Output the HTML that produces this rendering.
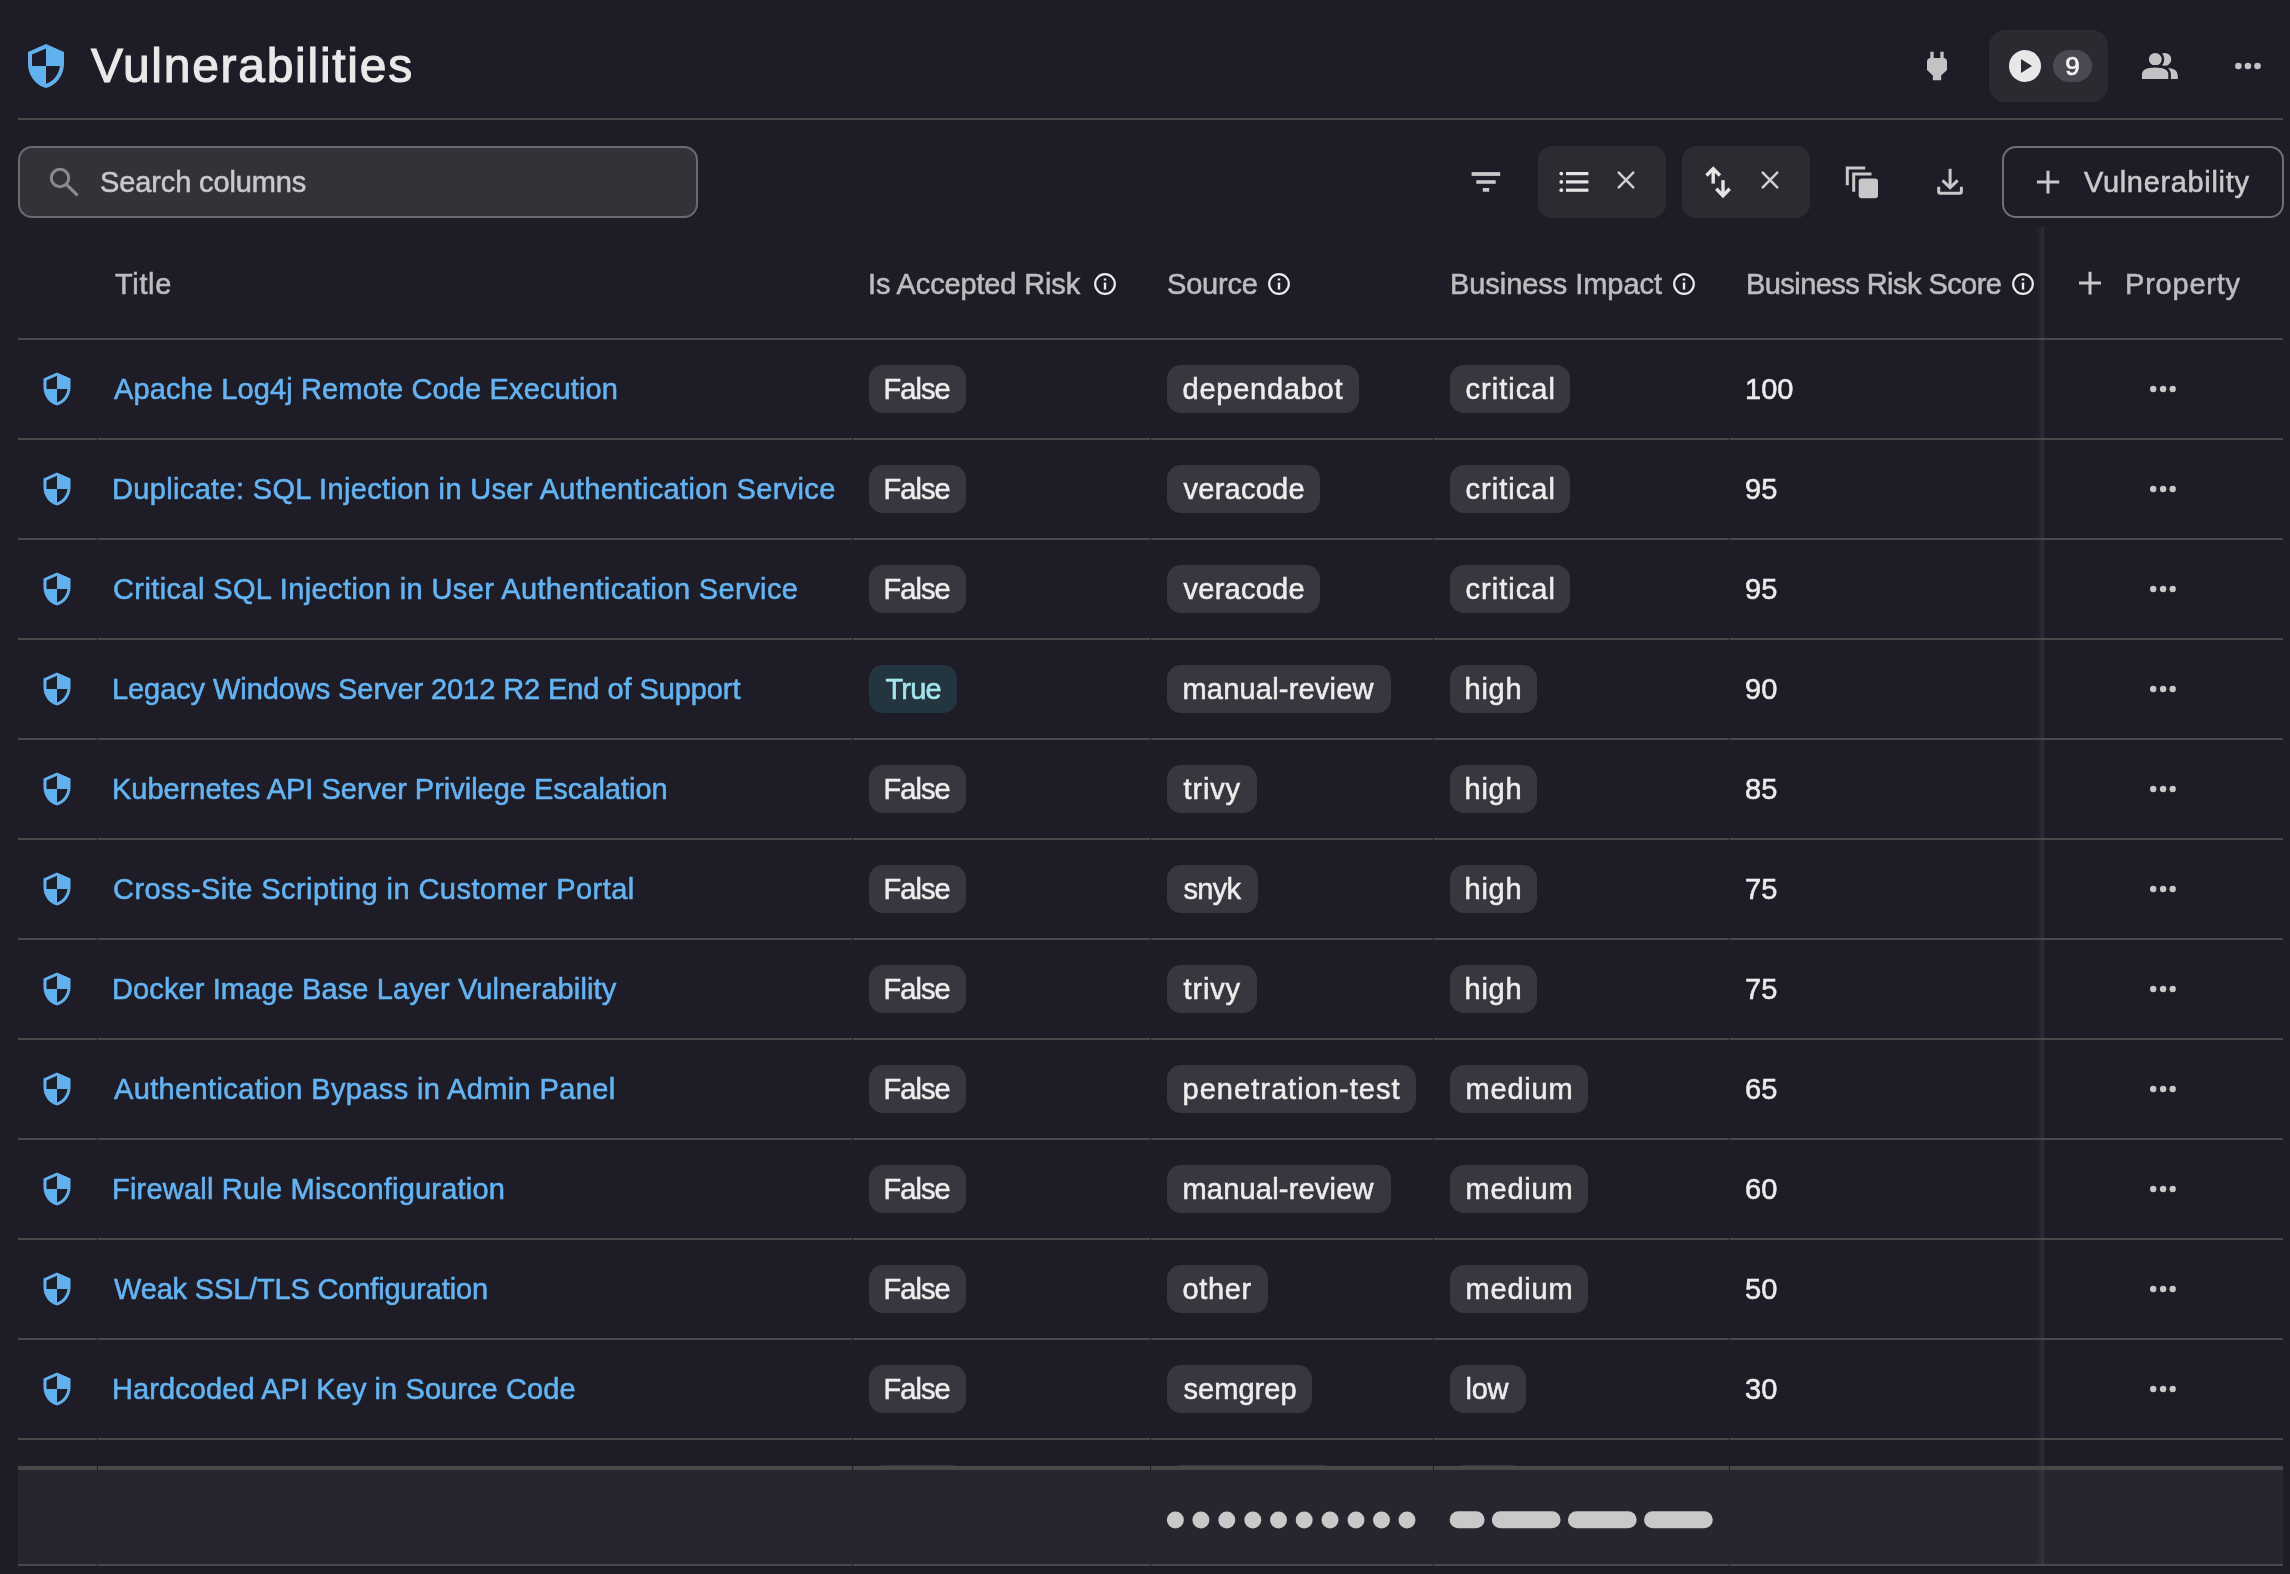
<!DOCTYPE html>
<html>
<head>
<meta charset="utf-8">
<style>
html,body{margin:0;padding:0;}
body{width:2290px;height:1574px;background:#1e1c26;position:relative;overflow:hidden;font-family:"Liberation Sans",sans-serif;}
.t,.pill{will-change:transform;-webkit-text-stroke:0.55px currentColor;}
.a{position:absolute;}
.t{position:absolute;white-space:nowrap;font-size:29px;line-height:29px;}
.hline{position:absolute;height:2px;background:#484749;}
.row{position:absolute;left:0;width:2290px;height:100px;}
.rl{position:absolute;left:18px;top:98px;width:2265px;height:2px;background:linear-gradient(90deg,#484749 0 79px,#1e1c26 79px 80px,#484749 80px 834px,#1e1c26 834px 835px,#484749 835px 1132px,#1e1c26 1132px 1133px,#484749 1133px 1415px,#1e1c26 1415px 1416px,#484749 1416px 1711px,#1e1c26 1711px 1712px,#484749 1712px);}
.pill{position:absolute;box-sizing:border-box;height:48px;border-radius:14px;background:#38363e;color:#ededed;font-size:29px;line-height:48px;text-align:left;white-space:nowrap;}
.pill.tr{background:#23353e;color:#a6e5ee;}
.link{color:#64b4f3;}
.hdr{color:#bdbcbf;}
.score{color:#ececec;}
.tb{position:absolute;top:146px;width:128px;height:72px;border-radius:14px;background:#2c2b32;}
</style>
</head>
<body>
<svg width="0" height="0" style="position:absolute">
<defs>
<path id="sh" fill="#62b1ef" d="M12 1L3 5v6c0 5.55 3.84 10.74 9 12 5.16-1.26 9-6.45 9-12V5l-9-4zm0 10.99h7c-.53 4.12-3.28 7.79-7 8.94V12H5V6.3l7-3.11v8.8z"/>
<g id="dots" fill="#c8c8c8"><circle cx="5.2" cy="5" r="3.2"/><circle cx="15.1" cy="5" r="3.2"/><circle cx="24.7" cy="5" r="3.2"/></g>
<g id="info"><circle cx="11" cy="11" r="9.8" stroke-width="2.2" fill="none" stroke="#ececec"/><rect x="9.8" y="9.6" width="2.4" height="7" fill="#ececec"/><rect x="9.8" y="5.4" width="2.4" height="2.1" fill="#ececec"/></g>
</defs>
</svg>

<!-- page header -->
<svg class="a" style="left:22px;top:42px" width="48" height="48" viewBox="0 0 24 24"><use href="#sh"/></svg>
<div class="t" style="left:91px;top:42.3px;font-size:48px;line-height:48px;color:#e9e9ea;letter-spacing:1.72px;-webkit-text-stroke:1.1px #e9e9ea">Vulnerabilities</div>

<!-- plug -->
<svg class="a" style="left:1917px;top:46.75px" width="40" height="38" viewBox="0 0 24 24" preserveAspectRatio="none"><path fill="#c3c3c5" d="M16.01 7L16 3h-2v4h-4V3H8v4h-.01C7 6.99 6 7.99 6 8.99v5.49L9.5 18v3h5v-3l3.5-3.51v-5.5c0-1-1-2-1.99-1.99z"/></svg>
<!-- run pill -->
<div class="a" style="left:1989px;top:30px;width:119px;height:72px;border-radius:16px;background:#2b2a31"></div>
<svg class="a" style="left:2009px;top:50px" width="32" height="32" viewBox="0 0 32 32"><circle cx="16" cy="16" r="16" fill="#e8e8e9"/><path d="M12 9 L12 23 L23 16 Z" fill="#2b2a31"/></svg>
<div class="a" style="left:2053px;top:50px;width:39px;height:32px;border-radius:16px;background:#4a4850"></div>
<div class="t" style="left:2053px;top:50px;width:39px;height:32px;color:#f6f6f6;font-size:26px;line-height:32px;text-align:center;-webkit-text-stroke:0.6px #f6f6f6">9</div>
<!-- people -->
<svg class="a" style="left:2138px;top:50px" width="44" height="32" viewBox="2138 50 44 32">
<circle cx="2164.8" cy="59.4" r="6.4" fill="#c3c3c5"/>
<path d="M2152 79 V72 Q2152 67.9 2162 67.9 H2167 Q2177.8 68.2 2177.8 75.5 V79 Z" fill="#c3c3c5"/>
<circle cx="2155.3" cy="59.3" r="7.7" fill="#c3c3c5" stroke="#1e1c26" stroke-width="2.6"/>
<path d="M2140.7 80.3 V74.5 Q2140.7 66.2 2155.2 66.2 Q2169.6 66.2 2169.6 74.5 V80.3 Z" fill="#c3c3c5" stroke="#1e1c26" stroke-width="2.6"/>
<rect x="2138" y="79" width="44" height="4" fill="#1e1c26"/>
</svg>
<svg class="a" style="left:2233px;top:61px" width="30" height="10" viewBox="0 0 30 10"><g fill="#c3c3c5"><circle cx="5.4" cy="5" r="3.3"/><circle cx="14.9" cy="5" r="3.3"/><circle cx="24.5" cy="5" r="3.3"/></g></svg>

<div class="hline" style="left:18px;top:118px;width:2265px"></div>

<!-- search -->
<div class="a" style="left:18px;top:146px;width:676px;height:68px;border:2px solid #6b6a6e;border-radius:14px;background:#343239"></div>
<svg class="a" style="left:40px;top:158px" width="44" height="44" viewBox="40 158 44 44"><circle cx="60" cy="178" r="8.7" fill="none" stroke="#8a898d" stroke-width="3"/><line x1="66.3" y1="184.3" x2="77.6" y2="195.4" stroke="#8a898d" stroke-width="3.2"/></svg>
<div class="t" style="left:99.8px;top:167.6px;color:#c9c8cb;letter-spacing:-0.125px">Search columns</div>

<!-- toolbar -->
<svg class="a" style="left:1466px;top:162px" width="40" height="40" viewBox="1466 162 40 40"><g fill="#c8c8ca"><rect x="1471.6" y="172.1" width="28.6" height="3.8"/><rect x="1476.3" y="180.2" width="19.4" height="3.6"/><rect x="1482.8" y="188" width="6.4" height="3.7"/></g></svg>
<div class="tb" style="left:1538px"></div>
<svg class="a" style="left:1550px;top:160px" width="100" height="40" viewBox="1550 160 100 40"><g fill="#e6e6e7"><circle cx="1561.3" cy="173.6" r="1.9"/><circle cx="1561.3" cy="181.9" r="1.9"/><circle cx="1561.3" cy="190.2" r="1.9"/><rect x="1566" y="172" width="22.4" height="3.2"/><rect x="1566" y="180.3" width="22.4" height="3.2"/><rect x="1566" y="188.6" width="22.4" height="3.2"/></g><path d="M1618 171.9 L1634 188.2 M1634 171.9 L1618 188.2" stroke="#cfcfd1" stroke-width="2.5"/></svg>
<div class="tb" style="left:1682px"></div>
<svg class="a" style="left:1695px;top:160px" width="100" height="45" viewBox="1695 160 100 45"><g fill="none" stroke="#e6e6e7" stroke-width="3.4"><path d="M1713.2 183.6 V169"/><path d="M1706.5 175.5 L1713.2 168.6 L1719.9 175.5"/><path d="M1723 180.2 V196"/><path d="M1716.3 188.8 L1723 195.7 L1729.7 188.8"/></g><path d="M1762 171.9 L1778 188.2 M1778 171.9 L1762 188.2" stroke="#cfcfd1" stroke-width="2.5"/></svg>
<svg class="a" style="left:1840px;top:160px" width="45" height="45" viewBox="1840 160 45 45"><g fill="none" stroke="#c8c8ca" stroke-width="3"><path d="M1847.3 185.3 V167.9 H1865.2"/><path d="M1853.7 191.8 V174 H1871.5"/></g><rect x="1858.7" y="178.6" width="19.3" height="19.6" rx="3" fill="#c8c8ca"/></svg>
<svg class="a" style="left:1930px;top:160px" width="40" height="40" viewBox="1930 160 40 40"><g fill="none" stroke="#c8c8ca" stroke-width="3"><path d="M1950.1 168.8 V187"/><path d="M1942.5 180.3 L1950.1 187.6 L1957.7 180.3"/><path d="M1938.7 186.7 V191.5 Q1938.7 193.3 1940.5 193.3 H1959.6 Q1961.4 193.3 1961.4 191.5 V186.7"/></g></svg>
<div class="a" style="left:2002px;top:146px;width:278px;height:68px;border:2px solid #706f73;border-radius:14px"></div>
<svg class="a" style="left:2030px;top:165px" width="36" height="36" viewBox="2030 165 36 36"><path d="M2036.9 182 H2059.2 M2048 170.7 V193.4" stroke="#c8c8ca" stroke-width="3"/></svg>
<div class="t" style="left:2084px;top:167.7px;color:#c9c8cb;letter-spacing:0.667px">Vulnerability</div>

<!-- table header -->
<div class="t hdr" style="left:114.5px;top:270.4px;letter-spacing:0.655px">Title</div>
<div class="t hdr" style="left:868px;top:270.4px;letter-spacing:-0.145px">Is Accepted Risk</div>
<svg class="a" style="left:1094px;top:273.2px" width="22" height="22"><use href="#info"/></svg>
<div class="t hdr" style="left:1166.5px;top:270.4px;letter-spacing:-0.191px">Source</div>
<svg class="a" style="left:1268px;top:273.1px" width="22" height="22"><use href="#info"/></svg>
<div class="t hdr" style="left:1449.5px;top:270.4px;letter-spacing:-0.057px">Business Impact</div>
<svg class="a" style="left:1673px;top:273.2px" width="22" height="22"><use href="#info"/></svg>
<div class="t hdr" style="left:1745.6px;top:270.4px;letter-spacing:-0.556px">Business Risk Score</div>
<svg class="a" style="left:2012px;top:273.2px" width="22" height="22"><use href="#info"/></svg>
<svg class="a" style="left:2075px;top:268px" width="30" height="30" viewBox="2075 268 30 30"><path d="M2079 283 H2101 M2090 271.8 V294.4" stroke="#c8c8ca" stroke-width="3"/></svg>
<div class="t hdr" style="left:2125.3px;top:269.7px;letter-spacing:0.786px">Property</div>
<div class="hline" style="left:18px;top:338px;width:2265px"></div>

<!-- sticky separator -->
<div class="a" style="left:2035px;top:227px;width:9px;height:1239px;background:linear-gradient(90deg,rgba(255,255,255,0),rgba(255,255,255,0.02) 40%,rgba(255,255,255,0.075))"></div>
<div class="row" style="top:340px">
<svg class="a" style="left:39px;top:30.5px" width="36" height="36" viewBox="0 0 24 24"><use href="#sh"/></svg>
<div class="t link" style="left:114px;top:34.5px;letter-spacing:0.125px">Apache Log4j Remote Code Execution</div>
<div class="pill" style="left:869px;top:25px;width:97px;padding-left:14.5px;letter-spacing:-0.946px">False</div>
<div class="pill" style="left:1167px;top:25px;width:192px;padding-left:15.5px;letter-spacing:0.76px">dependabot</div>
<div class="pill" style="left:1450px;top:25px;width:120px;padding-left:15.5px;letter-spacing:1.039px">critical</div>
<div class="t score" style="left:1745px;top:34.5px">100</div>
<svg class="a" style="left:2148px;top:44px" width="30" height="10"><use href="#dots"/></svg>
<div class="rl"></div></div>
<div class="row" style="top:440px">
<svg class="a" style="left:39px;top:30.5px" width="36" height="36" viewBox="0 0 24 24"><use href="#sh"/></svg>
<div class="t link" style="left:112px;top:34.5px;letter-spacing:0.34px">Duplicate: SQL Injection in User Authentication Service</div>
<div class="pill" style="left:869px;top:25px;width:97px;padding-left:14.5px;letter-spacing:-0.946px">False</div>
<div class="pill" style="left:1167px;top:25px;width:153px;padding-left:16.5px;letter-spacing:0.261px">veracode</div>
<div class="pill" style="left:1450px;top:25px;width:120px;padding-left:15.5px;letter-spacing:1.039px">critical</div>
<div class="t score" style="left:1745px;top:34.5px">95</div>
<svg class="a" style="left:2148px;top:44px" width="30" height="10"><use href="#dots"/></svg>
<div class="rl"></div></div>
<div class="row" style="top:540px">
<svg class="a" style="left:39px;top:30.5px" width="36" height="36" viewBox="0 0 24 24"><use href="#sh"/></svg>
<div class="t link" style="left:113px;top:34.5px;letter-spacing:0.39px">Critical SQL Injection in User Authentication Service</div>
<div class="pill" style="left:869px;top:25px;width:97px;padding-left:14.5px;letter-spacing:-0.946px">False</div>
<div class="pill" style="left:1167px;top:25px;width:153px;padding-left:16.5px;letter-spacing:0.261px">veracode</div>
<div class="pill" style="left:1450px;top:25px;width:120px;padding-left:15.5px;letter-spacing:1.039px">critical</div>
<div class="t score" style="left:1745px;top:34.5px">95</div>
<svg class="a" style="left:2148px;top:44px" width="30" height="10"><use href="#dots"/></svg>
<div class="rl"></div></div>
<div class="row" style="top:640px">
<svg class="a" style="left:39px;top:30.5px" width="36" height="36" viewBox="0 0 24 24"><use href="#sh"/></svg>
<div class="t link" style="left:112px;top:34.5px;letter-spacing:-0.08px">Legacy Windows Server 2012 R2 End of Support</div>
<div class="pill tr" style="left:869px;top:25px;width:88px;padding-left:16.5px;letter-spacing:-0.808px">True</div>
<div class="pill" style="left:1167px;top:25px;width:224px;padding-left:15.5px;letter-spacing:0.198px">manual-review</div>
<div class="pill" style="left:1450px;top:25px;width:87px;padding-left:14.5px;letter-spacing:0.767px">high</div>
<div class="t score" style="left:1745px;top:34.5px">90</div>
<svg class="a" style="left:2148px;top:44px" width="30" height="10"><use href="#dots"/></svg>
<div class="rl"></div></div>
<div class="row" style="top:740px">
<svg class="a" style="left:39px;top:30.5px" width="36" height="36" viewBox="0 0 24 24"><use href="#sh"/></svg>
<div class="t link" style="left:112px;top:34.5px;letter-spacing:-0.01px">Kubernetes API Server Privilege Escalation</div>
<div class="pill" style="left:869px;top:25px;width:97px;padding-left:14.5px;letter-spacing:-0.946px">False</div>
<div class="pill" style="left:1167px;top:25px;width:90px;padding-left:16.5px;letter-spacing:0.836px">trivy</div>
<div class="pill" style="left:1450px;top:25px;width:87px;padding-left:14.5px;letter-spacing:0.767px">high</div>
<div class="t score" style="left:1745px;top:34.5px">85</div>
<svg class="a" style="left:2148px;top:44px" width="30" height="10"><use href="#dots"/></svg>
<div class="rl"></div></div>
<div class="row" style="top:840px">
<svg class="a" style="left:39px;top:30.5px" width="36" height="36" viewBox="0 0 24 24"><use href="#sh"/></svg>
<div class="t link" style="left:113px;top:34.5px;letter-spacing:0.44px">Cross-Site Scripting in Customer Portal</div>
<div class="pill" style="left:869px;top:25px;width:97px;padding-left:14.5px;letter-spacing:-0.946px">False</div>
<div class="pill" style="left:1167px;top:25px;width:91px;padding-left:16.5px;letter-spacing:-0.709px">snyk</div>
<div class="pill" style="left:1450px;top:25px;width:87px;padding-left:14.5px;letter-spacing:0.767px">high</div>
<div class="t score" style="left:1745px;top:34.5px">75</div>
<svg class="a" style="left:2148px;top:44px" width="30" height="10"><use href="#dots"/></svg>
<div class="rl"></div></div>
<div class="row" style="top:940px">
<svg class="a" style="left:39px;top:30.5px" width="36" height="36" viewBox="0 0 24 24"><use href="#sh"/></svg>
<div class="t link" style="left:112px;top:34.5px;letter-spacing:0.11px">Docker Image Base Layer Vulnerability</div>
<div class="pill" style="left:869px;top:25px;width:97px;padding-left:14.5px;letter-spacing:-0.946px">False</div>
<div class="pill" style="left:1167px;top:25px;width:90px;padding-left:16.5px;letter-spacing:0.836px">trivy</div>
<div class="pill" style="left:1450px;top:25px;width:87px;padding-left:14.5px;letter-spacing:0.767px">high</div>
<div class="t score" style="left:1745px;top:34.5px">75</div>
<svg class="a" style="left:2148px;top:44px" width="30" height="10"><use href="#dots"/></svg>
<div class="rl"></div></div>
<div class="row" style="top:1040px">
<svg class="a" style="left:39px;top:30.5px" width="36" height="36" viewBox="0 0 24 24"><use href="#sh"/></svg>
<div class="t link" style="left:114px;top:34.5px;letter-spacing:0.36px">Authentication Bypass in Admin Panel</div>
<div class="pill" style="left:869px;top:25px;width:97px;padding-left:14.5px;letter-spacing:-0.946px">False</div>
<div class="pill" style="left:1167px;top:25px;width:249px;padding-left:15.5px;letter-spacing:1.036px">penetration-test</div>
<div class="pill" style="left:1450px;top:25px;width:138px;padding-left:15.5px;letter-spacing:0.803px">medium</div>
<div class="t score" style="left:1745px;top:34.5px">65</div>
<svg class="a" style="left:2148px;top:44px" width="30" height="10"><use href="#dots"/></svg>
<div class="rl"></div></div>
<div class="row" style="top:1140px">
<svg class="a" style="left:39px;top:30.5px" width="36" height="36" viewBox="0 0 24 24"><use href="#sh"/></svg>
<div class="t link" style="left:112px;top:34.5px;letter-spacing:0.21px">Firewall Rule Misconfiguration</div>
<div class="pill" style="left:869px;top:25px;width:97px;padding-left:14.5px;letter-spacing:-0.946px">False</div>
<div class="pill" style="left:1167px;top:25px;width:224px;padding-left:15.5px;letter-spacing:0.198px">manual-review</div>
<div class="pill" style="left:1450px;top:25px;width:138px;padding-left:15.5px;letter-spacing:0.803px">medium</div>
<div class="t score" style="left:1745px;top:34.5px">60</div>
<svg class="a" style="left:2148px;top:44px" width="30" height="10"><use href="#dots"/></svg>
<div class="rl"></div></div>
<div class="row" style="top:1240px">
<svg class="a" style="left:39px;top:30.5px" width="36" height="36" viewBox="0 0 24 24"><use href="#sh"/></svg>
<div class="t link" style="left:114px;top:34.5px;letter-spacing:-0.17px">Weak SSL/TLS Configuration</div>
<div class="pill" style="left:869px;top:25px;width:97px;padding-left:14.5px;letter-spacing:-0.946px">False</div>
<div class="pill" style="left:1167px;top:25px;width:101px;padding-left:15.5px;letter-spacing:0.639px">other</div>
<div class="pill" style="left:1450px;top:25px;width:138px;padding-left:15.5px;letter-spacing:0.803px">medium</div>
<div class="t score" style="left:1745px;top:34.5px">50</div>
<svg class="a" style="left:2148px;top:44px" width="30" height="10"><use href="#dots"/></svg>
<div class="rl"></div></div>
<div class="row" style="top:1340px">
<svg class="a" style="left:39px;top:30.5px" width="36" height="36" viewBox="0 0 24 24"><use href="#sh"/></svg>
<div class="t link" style="left:112px;top:34.5px;letter-spacing:0.08px">Hardcoded API Key in Source Code</div>
<div class="pill" style="left:869px;top:25px;width:97px;padding-left:14.5px;letter-spacing:-0.946px">False</div>
<div class="pill" style="left:1167px;top:25px;width:145px;padding-left:16.5px;letter-spacing:0.05px">semgrep</div>
<div class="pill" style="left:1450px;top:25px;width:76px;padding-left:15.5px;letter-spacing:-0.286px">low</div>
<div class="t score" style="left:1745px;top:34.5px">30</div>
<svg class="a" style="left:2148px;top:44px" width="30" height="10"><use href="#dots"/></svg>
<div class="rl"></div></div>
<div class="row" style="top:1440px">
<div class="pill" style="left:869px;top:25px;width:97px;padding-left:14.5px;letter-spacing:-0.946px">False</div>
<div class="pill" style="left:1167px;top:25px;width:170px;padding-left:16.5px;letter-spacing:0.05px">semgrep</div>
<div class="pill" style="left:1450px;top:25px;width:76px;padding-left:15.5px;letter-spacing:-0.286px">low</div>
<div class="t score" style="left:1745px;top:34.5px">20</div>
<svg class="a" style="left:2148px;top:44px" width="30" height="10"><use href="#dots"/></svg>
<div class="rl"></div></div>

<!-- footer -->
<div class="a" style="left:18px;top:1466px;width:2265px;height:4px;background:linear-gradient(90deg,#48474a 0 79px,#1e1c26 79px 80px,#48474a 80px 834px,#1e1c26 834px 835px,#48474a 835px 1132px,#1e1c26 1132px 1133px,#48474a 1133px 1415px,#1e1c26 1415px 1416px,#48474a 1416px 1711px,#1e1c26 1711px 1712px,#48474a 1712px)"></div>
<div class="a" style="left:18px;top:1470px;width:2265px;height:94px;background:#27252e"></div>
<div class="a" style="left:2035px;top:1470px;width:9px;height:94px;background:linear-gradient(90deg,rgba(255,255,255,0),rgba(255,255,255,0.02) 40%,rgba(255,255,255,0.075))"></div>
<div class="a" style="left:18px;top:1564px;width:2265px;height:2px;background:linear-gradient(90deg,#48474a 0 79px,#1e1c26 79px 80px,#48474a 80px 834px,#1e1c26 834px 835px,#48474a 835px 1132px,#1e1c26 1132px 1133px,#48474a 1133px 1415px,#1e1c26 1415px 1416px,#48474a 1416px 1711px,#1e1c26 1711px 1712px,#48474a 1712px)"></div>
<svg class="a" style="left:1160px;top:1505px" width="560" height="30" viewBox="1160 1505 560 30"><g fill="#c9c9c9">
<circle cx="1175.4" cy="1520" r="8.5"/><circle cx="1200.9" cy="1520" r="8.5"/><circle cx="1226.8" cy="1520" r="8.5"/><circle cx="1252.8" cy="1520" r="8.5"/><circle cx="1278.5" cy="1520" r="8.5"/><circle cx="1304.2" cy="1520" r="8.5"/><circle cx="1330" cy="1520" r="8.5"/><circle cx="1356" cy="1520" r="8.5"/><circle cx="1381.5" cy="1520" r="8.5"/><circle cx="1407" cy="1520" r="8.5"/>
<rect x="1449.6" y="1511.3" width="35" height="17" rx="8.5"/><rect x="1491.8" y="1511.3" width="68.8" height="17" rx="8.5"/><rect x="1567.9" y="1511.3" width="68.8" height="17" rx="8.5"/><rect x="1644" y="1511.3" width="68.8" height="17" rx="8.5"/>
</g></svg>
</body>
</html>
